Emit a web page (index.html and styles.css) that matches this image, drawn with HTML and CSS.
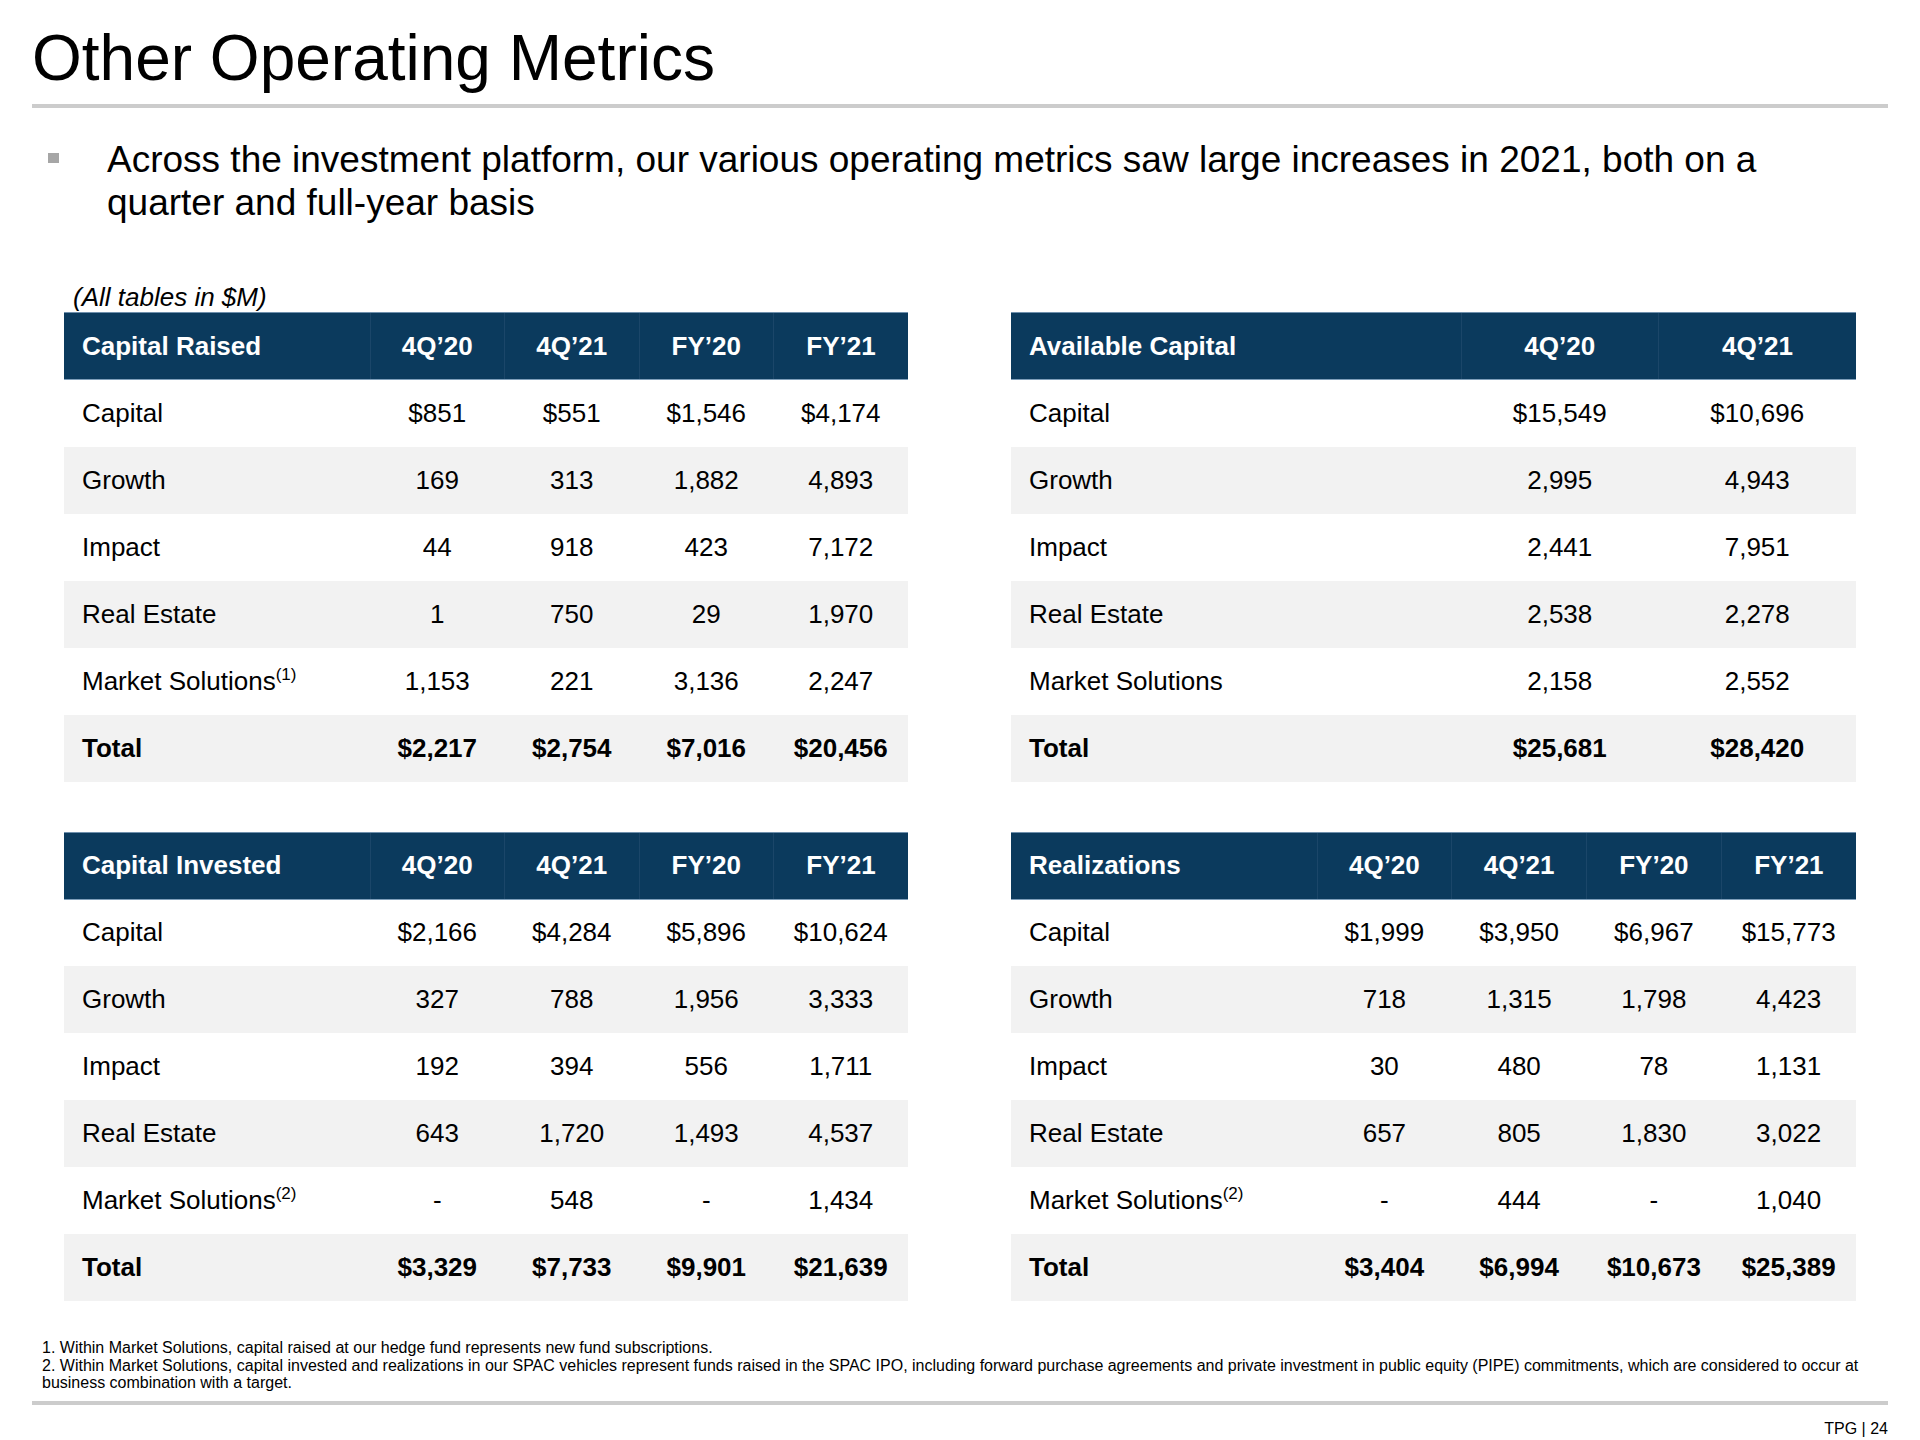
FILE: index.html
```html
<!DOCTYPE html>
<html lang="en">
<head>
  <meta charset="UTF-8" />
  <title>Other Operating Metrics - TPG</title>
  <link rel="stylesheet" href="styles.css">
</head>
<body>

  <div class="slide">
    <h1 class="title">Other Operating Metrics</h1>
    <div class="rule"></div>

    <ul class="points">
      <li>Across the investment platform, our various operating metrics saw large increases in 2021, both on a quarter and full-year basis</li>
    </ul>

    <div class="units">(All tables in $M)</div>

    <div class="tables">

      <table class="metrics four">
        <thead>
          <tr><th>Capital Raised</th><th>4Q’20</th><th>4Q’21</th><th>FY’20</th><th>FY’21</th></tr>
        </thead>
        <tbody>
          <tr><td>Capital</td><td>$851</td><td>$551</td><td>$1,546</td><td>$4,174</td></tr>
          <tr><td>Growth</td><td>169</td><td>313</td><td>1,882</td><td>4,893</td></tr>
          <tr><td>Impact</td><td>44</td><td>918</td><td>423</td><td>7,172</td></tr>
          <tr><td>Real Estate</td><td>1</td><td>750</td><td>29</td><td>1,970</td></tr>
          <tr><td>Market Solutions<sup>(1)</sup></td><td>1,153</td><td>221</td><td>3,136</td><td>2,247</td></tr>
          <tr class="total"><td>Total</td><td>$2,217</td><td>$2,754</td><td>$7,016</td><td>$20,456</td></tr>
        </tbody>
      </table>

      <table class="metrics two">
        <thead>
          <tr><th>Available Capital</th><th>4Q’20</th><th>4Q’21</th></tr>
        </thead>
        <tbody>
          <tr><td>Capital</td><td>$15,549</td><td>$10,696</td></tr>
          <tr><td>Growth</td><td>2,995</td><td>4,943</td></tr>
          <tr><td>Impact</td><td>2,441</td><td>7,951</td></tr>
          <tr><td>Real Estate</td><td>2,538</td><td>2,278</td></tr>
          <tr><td>Market Solutions</td><td>2,158</td><td>2,552</td></tr>
          <tr class="total"><td>Total</td><td>$25,681</td><td>$28,420</td></tr>
        </tbody>
      </table>

      <table class="metrics four">
        <thead>
          <tr><th>Capital Invested</th><th>4Q’20</th><th>4Q’21</th><th>FY’20</th><th>FY’21</th></tr>
        </thead>
        <tbody>
          <tr><td>Capital</td><td>$2,166</td><td>$4,284</td><td>$5,896</td><td>$10,624</td></tr>
          <tr><td>Growth</td><td>327</td><td>788</td><td>1,956</td><td>3,333</td></tr>
          <tr><td>Impact</td><td>192</td><td>394</td><td>556</td><td>1,711</td></tr>
          <tr><td>Real Estate</td><td>643</td><td>1,720</td><td>1,493</td><td>4,537</td></tr>
          <tr><td>Market Solutions<sup>(2)</sup></td><td>-</td><td>548</td><td>-</td><td>1,434</td></tr>
          <tr class="total"><td>Total</td><td>$3,329</td><td>$7,733</td><td>$9,901</td><td>$21,639</td></tr>
        </tbody>
      </table>

      <table class="metrics four">
        <thead>
          <tr><th>Realizations</th><th>4Q’20</th><th>4Q’21</th><th>FY’20</th><th>FY’21</th></tr>
        </thead>
        <tbody>
          <tr><td>Capital</td><td>$1,999</td><td>$3,950</td><td>$6,967</td><td>$15,773</td></tr>
          <tr><td>Growth</td><td>718</td><td>1,315</td><td>1,798</td><td>4,423</td></tr>
          <tr><td>Impact</td><td>30</td><td>480</td><td>78</td><td>1,131</td></tr>
          <tr><td>Real Estate</td><td>657</td><td>805</td><td>1,830</td><td>3,022</td></tr>
          <tr><td>Market Solutions<sup>(2)</sup></td><td>-</td><td>444</td><td>-</td><td>1,040</td></tr>
          <tr class="total"><td>Total</td><td>$3,404</td><td>$6,994</td><td>$10,673</td><td>$25,389</td></tr>
        </tbody>
      </table>

    </div>

    <div class="notes">
      <p>1. Within Market Solutions, capital raised at our hedge fund represents new fund subscriptions.</p>
      <p>2. Within Market Solutions, capital invested and realizations in our SPAC vehicles represent funds raised in the SPAC IPO, including forward purchase agreements and private investment in public equity (PIPE) commitments, which are considered to occur at business combination with a target.</p>
    </div>

    <div class="rule bottom"></div>
    <div class="page-no">TPG | 24</div>
  </div>

</body>
</html>
```

FILE: styles.css
```css
* {
  box-sizing: border-box;
  font-family: 'Liberation Sans', Arial, sans-serif;
}

body {
  margin: 0;
  background: #fff;
  color: #000;
}

.slide {
  width: 1920px;
  height: 1440px;
  overflow: hidden;
}

.title {
  margin: 26px 0 0;
  padding-left: 32px;
  font-size: 64px;
  line-height: 64px;
  font-weight: normal;
}

.rule {
  margin: 14px 32px 0;
  height: 4px;
  background: #cccccc;
}

.points {
  list-style: none;
  margin: 30px 0 0;
  padding: 0 60px 0 48px;
}

.points li {
  display: flex;
  font-size: 37px;
  line-height: 43px;
}

.points li::before {
  content: "";
  flex: 0 0 11px;
  height: 10px;
  margin: 15px 48px 0 0;
  background: #a6a6a6;
}

.units {
  margin-top: 59px;
  padding-left: 73px;
  font-size: 26px;
  line-height: 29px;
  font-style: italic;
}

.tables {
  display: grid;
  grid-template-columns: 844px 845px;
  column-gap: 103px;
  row-gap: 50px;
  margin-left: 64px;
}

.metrics {
  width: 100%;
  border-collapse: collapse;
  table-layout: fixed;
  font-size: 26px;
}

.metrics th,
.metrics td {
  height: 67px;
  padding: 0;
  text-align: center;
  vertical-align: middle;
  white-space: nowrap;
}

.metrics th:first-child,
.metrics td:first-child {
  text-align: left;
  padding-left: 18px;
}

.metrics.four th:first-child {
  width: 306px;
}

.metrics.two th:first-child {
  width: 450px;
}

.metrics thead th {
  background: #0b3a5d;
  color: #fff;
  font-weight: bold;
  border-top: 1px solid #6f90ad;
  border-bottom: 1px solid #7f9fbb;
  border-left: 1px solid #1b4669;
}

.metrics thead th:first-child {
  border-left: none;
}

.metrics tbody tr:nth-child(even) {
  background: #f2f2f2;
}

.metrics .total td {
  font-weight: bold;
}

.metrics sup {
  font-size: 17px;
  line-height: 0;
  vertical-align: 10px;
}

.notes {
  margin-top: 38px;
  padding: 0 46px 0 42px;
  font-size: 16px;
  line-height: 17.5px;
}

.notes p {
  margin: 0;
}

.rule.bottom {
  margin-top: 9px;
}

.page-no {
  margin-top: 15px;
  padding-right: 32px;
  text-align: right;
  font-size: 16px;
  line-height: 18px;
}
```
